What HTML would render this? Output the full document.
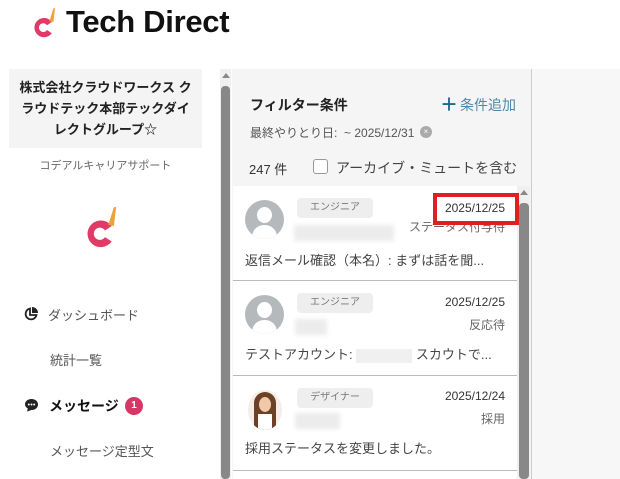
<!DOCTYPE html>
<html><head><meta charset="utf-8"><style>
*{box-sizing:border-box;margin:0;padding:0}
body{width:620px;height:479px;overflow:hidden;background:#fff;font-family:"Liberation Sans","Noto Sans CJK JP",sans-serif;color:#333;position:relative}
.abs{position:absolute}
.tag{position:absolute;left:297px;width:76px;height:20px;background:#eee;border-radius:4px;font-size:10px;color:#777;text-align:center;line-height:20px}
.date{position:absolute;right:115px;font-size:12px;color:#333}
.st{position:absolute;right:115px;font-size:12px;color:#666}
.msg{position:absolute;left:245px;font-size:13px;color:#444}
.blur{position:absolute;background:#ececec;filter:blur(2px);height:16px}
.sep{position:absolute;left:233px;width:284px;height:1px;background:#bbb}
.av{position:absolute;left:245px;width:39px;height:39px;border-radius:50%;background:#b5b9bb;overflow:hidden}
.av:before{content:"";position:absolute;left:12px;top:7px;width:15px;height:16px;border-radius:50%;background:#fff}
.av:after{content:"";position:absolute;left:7px;top:25px;width:25px;height:20px;border-radius:12px 12px 0 0;background:#fff}
</style></head><body>
<!-- logo -->
<svg class="abs" style="left:32px;top:6px" width="30" height="32" viewBox="0 0 36 40">
<path d="M24 20 A12 12 0 1 0 24 34 L18 30 A5.5 5.5 0 1 1 18 24 Z" fill="#e03a66"/>
<path d="M26 3 L28 3 L26 20 L21 19 Z" fill="#f0a03a"/>
</svg>
<div class="abs" style="left:66px;top:4px;font-size:31px;font-weight:bold;color:#111;letter-spacing:-0.3px">Tech Direct</div>
<!-- sidebar -->
<div class="abs" style="left:9px;top:69px;width:193px;height:79px;background:#f4f4f4;font-size:13px;font-weight:bold;text-align:center;line-height:21px;padding-top:8px;color:#222">株式会社クラウドワークス ク<br>ラウドテック本部テックダイ<br>レクトグループ☆</div>
<div class="abs" style="left:9px;top:157px;width:193px;text-align:center;font-size:11px;color:#666">コデアルキャリアサポート</div>
<svg class="abs" style="left:85px;top:203px" width="40" height="46" viewBox="0 0 36 40">
<path d="M24 20 A12 12 0 1 0 24 34 L18 30 A5.5 5.5 0 1 1 18 24 Z" fill="#e03a66"/>
<path d="M26 3 L28 3 L26 20 L21 19 Z" fill="#f0a03a"/>
</svg>
<svg class="abs" style="left:24px;top:307px" width="14" height="14" viewBox="0 0 14 14"><path d="M6 1.5 A5.5 5.5 0 1 0 12.5 8 L6 8 Z" fill="none" stroke="#222" stroke-width="1.8"/><path d="M8 0 A6 6 0 0 1 14 6 L8 6Z" fill="#222"/></svg>
<div class="abs" style="left:48px;top:305px;font-size:13px;color:#555">ダッシュボード</div>
<div class="abs" style="left:50px;top:350px;font-size:13px;color:#555">統計一覧</div>
<svg class="abs" style="left:24px;top:398px" width="15" height="14" viewBox="0 0 15 14"><path d="M7.5 1 C11.6 1 14 3.5 14 6.5 C14 9.5 11.6 12 7.5 12 L3 13.5 L3.8 10.5 C2 9.4 1 8 1 6.5 C1 3.5 3.4 1 7.5 1Z" fill="#222"/><circle cx="4.8" cy="6.5" r="1" fill="#fff"/><circle cx="7.5" cy="6.5" r="1" fill="#fff"/><circle cx="10.2" cy="6.5" r="1" fill="#fff"/></svg>
<div class="abs" style="left:49px;top:396px;font-size:14px;font-weight:bold;color:#111">メッセージ</div>
<div class="abs" style="left:125px;top:397px;width:18px;height:18px;border-radius:50%;background:#d93668;color:#fff;font-size:10px;font-weight:bold;text-align:center;line-height:18px">1</div>
<div class="abs" style="left:50px;top:441px;font-size:13px;color:#555">メッセージ定型文</div>
<!-- outer scrollbar -->
<div class="abs" style="left:220px;top:69px;width:11px;height:410px;background:#f0f0f0"></div>
<div class="abs" style="left:222px;top:73px;width:0;height:0;border-left:4px solid transparent;border-right:4px solid transparent;border-bottom:5px solid #888"></div>
<div class="abs" style="left:221px;top:86px;width:9px;height:393px;background:#888;border-radius:4px"></div>
<!-- middle -->
<div class="abs" style="left:232px;top:69px;width:299px;height:410px;background:#f5f5f5"></div>
<div class="abs" style="left:531px;top:69px;width:1px;height:410px;background:#ccc"></div>
<div class="abs" style="left:532px;top:69px;width:88px;height:410px;background:#f7f7f7"></div>
<div class="abs" style="left:250px;top:95px;font-size:14px;font-weight:bold;color:#222">フィルター条件</div>
<div class="abs" style="left:440px;top:91px;font-size:18px;font-weight:bold;color:#1d6a8a">＋</div>
<div class="abs" style="left:460px;top:95px;font-size:14px;color:#4a8aa8">条件追加</div>
<div class="abs" style="left:250px;top:124px;font-size:12px;color:#555">最終やりとり日: &nbsp;~ 2025/12/31</div>
<div class="abs" style="left:420px;top:126px;width:12px;height:12px;border-radius:50%;background:#aaa;color:#fff;font-size:8px;text-align:center;line-height:12px">×</div>
<div class="abs" style="left:249px;top:159px;font-size:13px;color:#333">247 件</div>
<div class="abs" style="left:313px;top:159px;width:15px;height:15px;border:1px solid #999;border-radius:3px;background:#fff"></div>
<div class="abs" style="left:336px;top:158px;font-size:14px;color:#444">アーカイブ・ミュートを含む</div>
<!-- list -->
<div class="abs" style="left:233px;top:186px;width:284px;height:293px;background:#fff"></div>
<div class="abs" style="left:517px;top:186px;width:13px;height:293px;background:#f0f0f0"></div>
<div class="abs" style="left:520px;top:190px;width:0;height:0;border-left:4px solid transparent;border-right:4px solid transparent;border-bottom:5px solid #888"></div>
<div class="abs" style="left:519px;top:203px;width:10px;height:276px;background:#888;border-radius:4px"></div>
<!-- item1 -->
<div class="av" style="top:200px"></div>
<div class="tag" style="top:198px">エンジニア</div>
<div class="blur" style="left:294px;top:225px;width:100px"></div>
<div class="st" style="top:218px">ステータス付与待</div>
<div class="abs" style="left:433px;top:193px;width:86px;height:32px;border:4px solid #e02020;background:#fff"></div>
<div class="date" style="top:201px">2025/12/25</div>
<div class="msg" style="top:250px">返信メール確認（本名）: まずは話を聞...</div>
<div class="sep" style="top:280px"></div>
<!-- item2 -->
<div class="av" style="top:295px"></div>
<div class="tag" style="top:293px">エンジニア</div>
<div class="blur" style="left:295px;top:319px;width:32px"></div>
<div class="date" style="top:295px">2025/12/25</div>
<div class="st" style="top:316px">反応待</div>
<div class="msg" style="top:344px">テストアカウント: <span style="display:inline-block;width:56px;height:14px;background:#f0f0f0;vertical-align:middle"></span> スカウトで...</div>
<div class="sep" style="top:375px"></div>
<!-- item3 -->
<div class="abs" style="left:248px;top:390px;width:34px;height:40px;border-radius:50%;background:#f5eee8;overflow:hidden">
<div class="abs" style="left:6px;top:2px;width:22px;height:38px;border-radius:11px 11px 4px 4px;background:#6b4226"></div>
<div class="abs" style="left:11px;top:7px;width:12px;height:15px;border-radius:50%;background:#f2c9a8"></div>
<div class="abs" style="left:10px;top:24px;width:14px;height:16px;background:#fff"></div>
</div>
<div class="tag" style="top:388px">デザイナー</div>
<div class="blur" style="left:295px;top:413px;width:45px"></div>
<div class="date" style="top:389px">2025/12/24</div>
<div class="st" style="top:410px">採用</div>
<div class="msg" style="top:438px">採用ステータスを変更しました。</div>
<div class="sep" style="top:470px"></div>
</body></html>
